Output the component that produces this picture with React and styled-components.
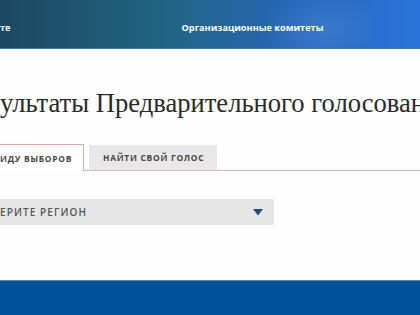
import React from "react";
import styled, { createGlobalStyle } from "styled-components";

const Global = createGlobalStyle`
  html, body { margin: 0; padding: 0; background: #fff; }
  body { width: 420px; height: 315px; overflow: hidden; }
  #root { width: 420px; height: 315px; overflow: hidden; }
`;

const Page = styled.div`
  width: 420px;
  height: 315px;
  display: flex;
  flex-direction: column;
  overflow: hidden;
  background: #fdfefd;
`;

const Header = styled.header`
  height: 49px;
  flex: none;
  display: flex;
  align-items: center;
  padding-top: 6px;
  box-sizing: border-box;
  background:
    radial-gradient(ellipse 60px 40px at 320px 30px, rgba(120,170,230,0.25), transparent),
    linear-gradient(90deg, #1b4862 0%, #1f5a74 25%, #23668c 45%, #2466b8 70%, #2a74da 100%);
  border-bottom: 1px solid #3d7fa8;
`;

const NavItem = styled.a`
  font-family: "Open Sans", sans-serif;
  font-weight: 700;
  font-size: 9.2px;
  color: #fff;
  text-decoration: none;
  white-space: nowrap;
  margin-left: ${(p) => p.$offset}px;
`;

const Main = styled.main`
  flex: 1;
  display: flex;
  flex-direction: column;
  padding-top: 39px;
  overflow: hidden;
`;

const Title = styled.h1`
  margin: 0;
  font-family: "Liberation Serif", serif;
  font-weight: 400;
  font-size: 26.6px;
  line-height: 30px;
  color: #2a2a2a;
  white-space: nowrap;
  padding-left: 0;
`;

const Tabs = styled.div`
  margin-top: 26px;
  display: flex;
  align-items: flex-end;
  height: 26px;
  border-bottom: 1px solid #e2b6b6;
`;

const Tab = styled.button`
  height: ${(p) => (p.$active ? 27 : 25)}px;
  margin-bottom: ${(p) => (p.$active ? -1 : 0)}px;
  box-sizing: border-box;
  padding: 0 ${(p) => (p.$active ? 14 : 14)}px 0 ${(p) => (p.$active ? 0 : 14)}px;
  margin-left: ${(p) => (p.$active ? 0 : 5)}px;
  width: ${(p) => (p.$active ? 84 : 128)}px;
  border: none;
  border-top: ${(p) => (p.$active ? "1px solid #dba9a9" : "none")};
  border-right: ${(p) => (p.$active ? "1px solid #dba9a9" : "none")};
  background: ${(p) => (p.$active ? "#fff" : "#e8e8e8")};
  font-family: "Open Sans", sans-serif;
  font-weight: 700;
  font-size: 8.4px;
  letter-spacing: 0.75px;
  color: #454545;
  white-space: nowrap;
  text-align: ${(p) => (p.$active ? "left" : "center")};
  cursor: pointer;
`;

const Select = styled.div`
  margin-top: 28px;
  width: 274px;
  height: 26px;
  background: #e6e6e6;
  display: flex;
  align-items: center;
  justify-content: space-between;
  padding: 0 11px 0 0;
  box-sizing: border-box;
`;

const SelectText = styled.span`
  font-family: "Open Sans", sans-serif;
  font-weight: 600;
  font-size: 10px;
  letter-spacing: 1.1px;
  color: #555;
  white-space: nowrap;
`;

const Footer = styled.footer`
  height: 34px;
  flex: none;
  background: #00509a;
  border-top: 1px solid #5588b3;
`;

export default function App() {
  return (
    <>
      <Global />
      <Page>
        <Header>
          <NavItem $offset={0}>те</NavItem>
          <NavItem $offset={171}>Организационные комитеты</NavItem>
        </Header>
        <Main>
          <Title>ультаты Предварительного голосования</Title>
          <Tabs>
            <Tab $active>ИДУ ВЫБОРОВ</Tab>
            <Tab>НАЙТИ СВОЙ ГОЛОС</Tab>
          </Tabs>
          <Select>
            <SelectText>ЕРИТЕ РЕГИОН</SelectText>
            <svg width="10" height="7" viewBox="0 0 10 7">
              <path d="M0 0 H10 L5 6.5 Z" fill="#1f4b7d" />
            </svg>
          </Select>
        </Main>
        <Footer />
      </Page>
    </>
  );
}
